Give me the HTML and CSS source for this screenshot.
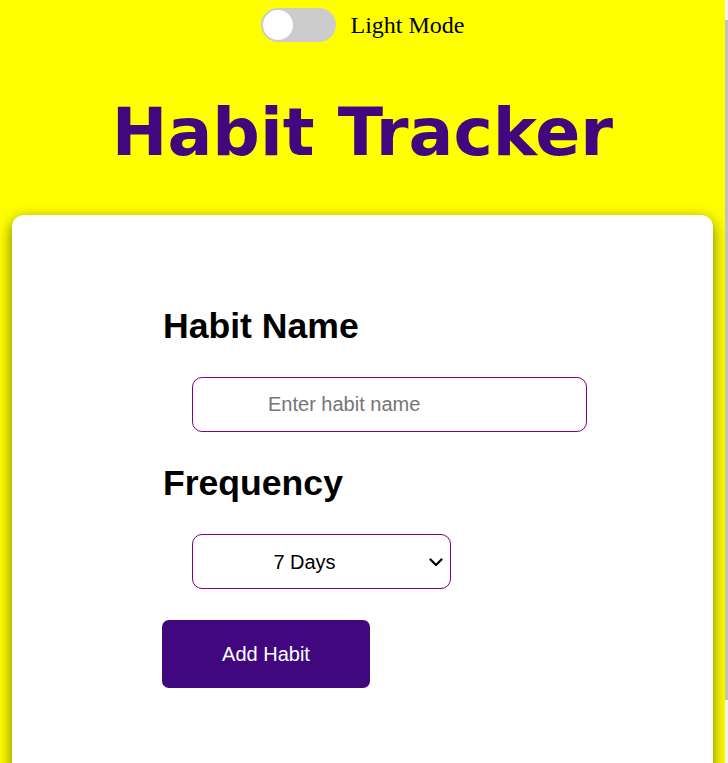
FILE: index.html
```html
<!DOCTYPE html>
<html lang="en">
<head>
<meta charset="utf-8">
<title>Habit Tracker</title>
<link rel="stylesheet" href="styles.css">
</head>
<body>
<div class="page">
  <div class="mode-bar">
    <label class="switch">
      <input type="checkbox" class="switch-input">
      <span class="switch-knob"></span>
    </label>
    <span class="mode-label">Light Mode</span>
  </div>
  <h1 class="title">Habit Tracker</h1>
  <main class="card">
    <form class="habit-form">
      <h2 class="field-label">Habit Name</h2>
      <input class="text-input" type="text" placeholder="Enter habit name">
      <h2 class="field-label">Frequency</h2>
      <div class="select-wrap">
        <select class="select-input">
          <option>7 Days</option>
          <option>14 Days</option>
          <option>30 Days</option>
        </select>
        <svg class="select-arrow" width="14" height="9" viewBox="0 0 14 9" aria-hidden="true">
          <path d="M1.5 1.5 L7 7 L12.5 1.5" fill="none" stroke="#000" stroke-width="2.2" stroke-linecap="round" stroke-linejoin="round"/>
        </svg>
      </div>
      <button type="button" class="add-btn">Add Habit</button>
    </form>
  </main>
</div>
<div class="scrollbar"><div class="scroll-thumb"></div></div>
</body>
</html>
```
FILE: styles.css
```css
html, body {
  margin: 0;
  padding: 0;
  height: 100%;
  overflow: hidden;
}
body {
  background: #ffff00;
  font-family: "Liberation Serif", "Times New Roman", serif;
}
.page {
  width: 725px;
}
.mode-bar {
  display: flex;
  justify-content: center;
  align-items: center;
  gap: 15px;
  padding-top: 8px;
  height: 34px;
}
.switch {
  position: relative;
  display: block;
  width: 75px;
  height: 34px;
  border-radius: 17px;
  background: #cccccc;
}
.switch-input {
  opacity: 0;
  width: 0;
  height: 0;
  margin: 0;
}
.switch-knob {
  position: absolute;
  left: 2px;
  top: 2px;
  width: 30px;
  height: 30px;
  border-radius: 50%;
  background: #ffffff;
}
.mode-label {
  font-size: 24px;
  color: #000;
}
.title {
  margin: 0;
  padding-top: 52px;
  height: 128px;
  box-sizing: border-box;
  text-align: center;
  font-family: "DejaVu Sans", Verdana, sans-serif;
  font-weight: bold;
  font-size: 66.5px;
  line-height: 76px;
  color: #40077f;
}
.card {
  margin: 45px 12px 0 12px;
  background: #ffffff;
  border-radius: 12px;
  box-shadow: 0 5px 15px rgba(0, 0, 0, 0.55);
  padding: 91px 0 200px 151px;
  min-height: 400px;
}
.habit-form {
  display: flex;
  flex-direction: column;
  align-items: flex-start;
  gap: 31px;
  font-family: "Liberation Sans", Arial, sans-serif;
}
.field-label {
  margin: 0;
  font-size: 35.6px;
  line-height: 40px;
  font-weight: bold;
  color: #000;
}
.text-input {
  margin-left: 29px;
  width: 395px;
  height: 55px;
  box-sizing: border-box;
  border: 1px solid #800080;
  border-radius: 10px;
  padding: 0 10px 0 75px;
  font-family: "Liberation Sans", Arial, sans-serif;
  font-size: 20px;
  color: #000;
  background: #fff;
  outline: none;
}
.text-input::placeholder {
  color: #757575;
}
.select-wrap {
  position: relative;
  margin-left: 29px;
}
.select-input {
  display: block;
  -webkit-appearance: none;
  appearance: none;
  width: 259px;
  height: 55px;
  box-sizing: border-box;
  border: 1px solid #800080;
  border-radius: 10px;
  padding: 0 44px 0 10px;
  font-family: "Liberation Sans", Arial, sans-serif;
  font-size: 20px;
  text-align: center;
  color: #000;
  background: #fff;
}
.select-arrow {
  position: absolute;
  left: 237px;
  top: 24px;
  pointer-events: none;
}
.add-btn {
  margin-left: -1px;
  width: 208px;
  height: 68px;
  border: none;
  border-radius: 7px;
  background: #40077f;
  color: #ffffff;
  font-family: "Liberation Sans", Arial, sans-serif;
  font-size: 20px;
}
.scrollbar {
  position: fixed;
  top: 0;
  right: 0;
  width: 3px;
  height: 100%;
  background: #f1f1f1;
}
.scroll-thumb {
  margin-top: 20px;
  height: 680px;
  background: #c1c1c1;
}
```
